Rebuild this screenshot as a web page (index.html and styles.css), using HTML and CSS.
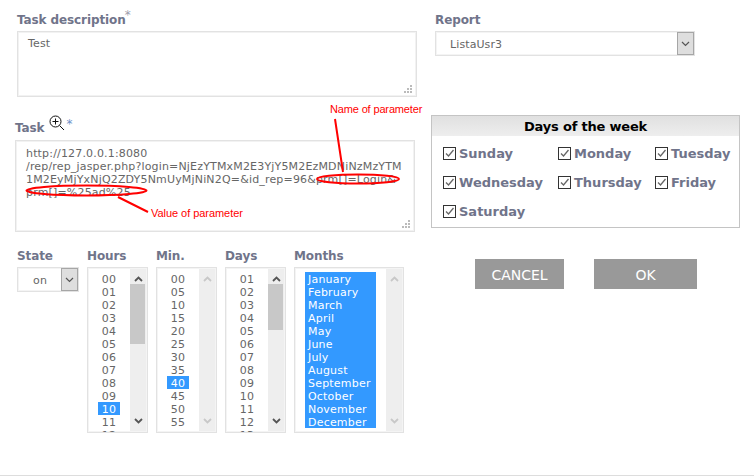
FILE: index.html
```html
<!DOCTYPE html>
<html lang="en">
<head>
<meta charset="utf-8">
<title>Task</title>
<link rel="stylesheet" href="styles.css">
</head>
<body>
<div class="page">
  <div class="left">
    <div class="label">Task description<sup class="req grey">*</sup></div>
    <div class="area area-desc">Test
      <svg class="grip" width="9" height="9" viewBox="0 0 9 9"><path d="M6 0h2v2H6zM3 3h2v2H3zM6 3h2v2H6zM0 6h2v2H0zM3 6h2v2H3zM6 6h2v2H6z"/></svg>
    </div>

    <div class="label label-task">Task
      <svg class="zoomicon" width="16" height="17" viewBox="0 0 16 17"><circle cx="6.5" cy="6.5" r="5.5"/><path d="M6.5 3.5v6M3.5 6.5h6M10.5 10.5l4.5 4.5"/></svg>
      <sup class="req blue">*</sup>
    </div>
    <div class="area area-task">http://127.0.0.1:8080<br>/rep/rep_jasper.php?login=NjEzYTMxM2E3YjY5M2EzMDNiNzMzYTM<br>1M2EyMjYxNjQ2ZDY5NmUyMjNiN2Q=&amp;id_rep=96&amp;prm[]=Login&amp;<br>prm[]=%25ad%25
      <svg class="grip" width="9" height="9" viewBox="0 0 9 9"><path d="M6 0h2v2H6zM3 3h2v2H3zM6 3h2v2H6zM0 6h2v2H0zM3 6h2v2H3zM6 6h2v2H6z"/></svg>
    </div>

    <div class="lists">
      <div class="col col-state">
        <div class="label">State</div>
        <div class="select">
          <span class="select-text select-on">on</span>
          <span class="select-btn"><svg width="9" height="6" viewBox="0 0 9 6"><path d="M1 1l3.5 3.5L8 1"/></svg></span>
        </div>
      </div>
      <div class="col col-hours">
        <div class="label">Hours</div>
        <div class="list list-short">
          <div class="opts">
            <div class="opt">00</div><div class="opt">01</div><div class="opt">02</div><div class="opt">03</div><div class="opt">04</div><div class="opt">05</div><div class="opt">06</div><div class="opt">07</div><div class="opt">08</div><div class="opt">09</div><div class="opt sel">10</div><div class="opt">11</div><div class="opt">12</div>
          </div>
          <div class="bar">
            <svg class="arrow" width="9" height="6" viewBox="0 0 9 6"><path d="M1 5l3.5-3.5L8 5"/></svg>
            <div class="thumb thumb-hours"></div>
            <svg class="arrow arrow-down" width="9" height="6" viewBox="0 0 9 6"><path d="M1 1l3.5 3.5L8 1"/></svg>
          </div>
        </div>
      </div>
      <div class="col col-min">
        <div class="label">Min.</div>
        <div class="list list-short">
          <div class="opts">
            <div class="opt">00</div><div class="opt">05</div><div class="opt">10</div><div class="opt">15</div><div class="opt">20</div><div class="opt">25</div><div class="opt">30</div><div class="opt">35</div><div class="opt sel">40</div><div class="opt">45</div><div class="opt">50</div><div class="opt">55</div>
          </div>
          <div class="bar bar-off">
            <svg class="arrow" width="9" height="6" viewBox="0 0 9 6"><path d="M1 5l3.5-3.5L8 5"/></svg>
            <svg class="arrow arrow-down" width="9" height="6" viewBox="0 0 9 6"><path d="M1 1l3.5 3.5L8 1"/></svg>
          </div>
        </div>
      </div>
      <div class="col col-days">
        <div class="label">Days</div>
        <div class="list list-short">
          <div class="opts">
            <div class="opt">01</div><div class="opt">02</div><div class="opt">03</div><div class="opt">04</div><div class="opt">05</div><div class="opt">06</div><div class="opt">07</div><div class="opt">08</div><div class="opt">09</div><div class="opt">10</div><div class="opt">11</div><div class="opt">12</div><div class="opt">13</div>
          </div>
          <div class="bar">
            <svg class="arrow" width="9" height="6" viewBox="0 0 9 6"><path d="M1 5l3.5-3.5L8 5"/></svg>
            <div class="thumb thumb-days"></div>
            <svg class="arrow arrow-down" width="9" height="6" viewBox="0 0 9 6"><path d="M1 1l3.5 3.5L8 1"/></svg>
          </div>
        </div>
      </div>
      <div class="col col-months">
        <div class="label">Months</div>
        <div class="list list-months">
          <div class="opts opts-months">
            <div class="opt sel">January</div><div class="opt sel">February</div><div class="opt sel">March</div><div class="opt sel">April</div><div class="opt sel">May</div><div class="opt sel">June</div><div class="opt sel">July</div><div class="opt sel">August</div><div class="opt sel">September</div><div class="opt sel">October</div><div class="opt sel">November</div><div class="opt sel">December</div>
          </div>
          <div class="bar bar-off">
            <svg class="arrow" width="9" height="6" viewBox="0 0 9 6"><path d="M1 5l3.5-3.5L8 5"/></svg>
            <svg class="arrow arrow-down" width="9" height="6" viewBox="0 0 9 6"><path d="M1 1l3.5 3.5L8 1"/></svg>
          </div>
        </div>
      </div>
    </div>
  </div>

  <div class="right">
    <div class="report">
      <div class="label">Report</div>
      <div class="select select-report">
        <span class="select-text">ListaUsr3</span>
        <span class="select-btn"><svg width="9" height="6" viewBox="0 0 9 6"><path d="M1 1l3.5 3.5L8 1"/></svg></span>
      </div>
    </div>

    <div class="days">
      <div class="days-title">Days of the week</div>
      <div class="days-grid">
        <div class="day"><span class="check"><svg width="11" height="11" viewBox="0 0 11 11"><path d="M2 5.5l2.5 2.5L9.5 2"/></svg></span>Sunday</div>
        <div class="day"><span class="check"><svg width="11" height="11" viewBox="0 0 11 11"><path d="M2 5.5l2.5 2.5L9.5 2"/></svg></span>Monday</div>
        <div class="day"><span class="check"><svg width="11" height="11" viewBox="0 0 11 11"><path d="M2 5.5l2.5 2.5L9.5 2"/></svg></span>Tuesday</div>
        <div class="day"><span class="check"><svg width="11" height="11" viewBox="0 0 11 11"><path d="M2 5.5l2.5 2.5L9.5 2"/></svg></span>Wednesday</div>
        <div class="day"><span class="check"><svg width="11" height="11" viewBox="0 0 11 11"><path d="M2 5.5l2.5 2.5L9.5 2"/></svg></span>Thursday</div>
        <div class="day"><span class="check"><svg width="11" height="11" viewBox="0 0 11 11"><path d="M2 5.5l2.5 2.5L9.5 2"/></svg></span>Friday</div>
        <div class="day"><span class="check"><svg width="11" height="11" viewBox="0 0 11 11"><path d="M2 5.5l2.5 2.5L9.5 2"/></svg></span>Saturday</div>
      </div>
    </div>

    <div class="actions">
      <button class="btn btn-cancel" type="button">CANCEL</button>
      <button class="btn btn-ok" type="button">OK</button>
    </div>
  </div>

  <svg class="notes" width="754" height="476" viewBox="0 0 754 476">
    <ellipse cx="358" cy="179" rx="41" ry="4.5"/>
    <ellipse cx="86.5" cy="190.5" rx="60" ry="5"/>
    <path d="M335 119l8 53M118 197l30 15"/>
    <text class="note-name" x="330" y="113">Name of parameter</text>
    <text class="note-value" x="151" y="217">Value of parameter</text>
  </svg>
</div>
</body>
</html>
```

FILE: styles.css
```css
* { box-sizing: border-box; }

html, body { margin: 0; padding: 0; background: #fff; }

body {
  font-family: "DejaVu Sans", Verdana, sans-serif;
  font-size: 11px;
  line-height: 13px;
  color: #666;
}

.page {
  position: relative;
  display: flex;
  width: 754px;
  height: 476px;
  overflow: hidden;
  border-bottom: 1px solid #ddd;
}

.left {
  width: 431px;
  padding: 12px 0 0 17px;
}

.right {
  width: 323px;
  padding-top: 12px;
}

.label {
  height: 19px;
  font-size: 12px;
  line-height: 17px;
  font-weight: bold;
  letter-spacing: -0.1px;
  color: #70748a;
  white-space: nowrap;
}

.req {
  font-size: 12px;
  font-weight: normal;
  line-height: 0;
  vertical-align: 5px;
}

.req.grey { color: #9a9cab; margin-left: -1px; }
.req.blue { color: #6d90c8; }

.label-task {
  display: flex;
  align-items: flex-start;
  height: 25px;
  margin: 18px 0 0 -2px;
  padding-top: 5px;
}

.zoomicon {
  margin: -5px 0 0 5px;
  fill: none;
  stroke: #111;
  stroke-width: 1;
}

.label-task .req { line-height: 13px; margin: -2px 0 0 1px; vertical-align: baseline; }

.area {
  position: relative;
  width: 400px;
  border: 1px solid #e2e2e2;
  box-shadow: inset 0 0 0 1px #f2f2f2;
  letter-spacing: 0.17px;
  white-space: nowrap;
}

.area-desc { height: 66px; padding: 5px 10px; }

.area-task {
  height: 92px;
  margin-left: -2px;
  padding: 6px 10px;
}

.grip {
  position: absolute;
  right: 3px;
  bottom: 2px;
  fill: #bbb;
}

.lists {
  display: flex;
  gap: 8px;
  margin-top: 16px;
}

.col-state { width: 62px; }
.col-hours, .col-min, .col-days { width: 61px; }
.col-months { width: 110px; }

.select {
  display: flex;
  align-items: stretch;
  height: 25px;
  border: 1px solid #e2e2e2;
  box-shadow: inset 0 0 0 1px #f4f4f4;
}

.select-text {
  flex: 1;
  padding-left: 14px;
  line-height: 26px;
  letter-spacing: 0.1px;
}

.select-on { text-align: center; padding: 0 0 0 1px; }

.select-btn {
  display: flex;
  align-items: center;
  justify-content: center;
  width: 17px;
  border: 1px solid #a6a6a6;
  background: #dedede;
}

.select-btn svg, .arrow { fill: none; stroke: #555; stroke-width: 1.2; }

.select-report { width: 260px; }

.report { padding-left: 4px; }

.list {
  display: flex;
  height: 166px;
  border: 1px solid #e2e2e2;
  box-shadow: inset 0 0 0 1px #f4f4f4;
  overflow: hidden;
}

.opts {
  flex: 1;
  min-width: 0;
  padding: 4px 0 0 10px;
  overflow: hidden;
}

.opts-months { padding-right: 11px; }

.opt {
  width: 22px;
  height: 13px;
  line-height: 15px;
  letter-spacing: 0.2px;
  text-align: center;
  white-space: nowrap;
}

.opts-months .opt {
  width: 71px;
  padding-left: 3px;
  text-align: left;
}

.sel { background: #3399ff; color: #fff; }

.bar {
  display: flex;
  flex-direction: column;
  align-items: center;
  width: 16px;
  margin: 1px 1px 1px 0;
  padding-top: 7px;
  background: #eeeeee;
}

.arrow { stroke-width: 1.8; flex: none; }

.arrow-down { margin-top: auto; margin-bottom: 7px; }

.bar-off .arrow { stroke: #c8c8c8; }

.thumb {
  flex: none;
  width: 15px;
  margin: 2px 1px 0 0;
  background: #c8c8c8;
}

.thumb-hours { height: 60px; }
.thumb-days { height: 46px; }

.days {
  width: 309px;
  height: 113px;
  margin-top: 59px;
  border: 1px solid #c4c4c4;
}

.days-title {
  height: 20px;
  font-size: 13px;
  line-height: 22px;
  font-weight: bold;
  letter-spacing: -0.2px;
  color: #000;
  text-align: center;
  background: linear-gradient(#e0e0e0, #eeeeee);
}

.days-grid {
  display: grid;
  grid-template-columns: 115px 97px 1fr;
  grid-auto-rows: 29px;
  padding: 3px 0 0 11px;
}

.day {
  display: flex;
  align-items: center;
  gap: 3px;
  font-size: 13px;
  font-weight: bold;
  color: #70748a;
  white-space: nowrap;
}

.check {
  display: flex;
  align-items: center;
  justify-content: center;
  width: 13px;
  height: 13px;
  border: 1px solid #333;
}

.check svg { fill: none; stroke: #666; stroke-width: 1.3; }

.actions {
  display: flex;
  gap: 30px;
  margin: 31px 0 0 44px;
}

.btn {
  height: 30px;
  padding: 2px 0 0;
  border: 0;
  background: #999;
  color: #fff;
  font: 14px "DejaVu Sans", Verdana, sans-serif;
}

.btn-cancel { width: 89px; }
.btn-ok { width: 103px; }

.notes {
  position: absolute;
  left: 0;
  top: 0;
  fill: none;
  stroke: #f00;
  stroke-width: 2;
  pointer-events: none;
}

.notes text {
  fill: #f00;
  stroke: none;
  font: 11px "Liberation Sans", Arial, sans-serif;
}

.note-name { letter-spacing: -0.15px; }
.note-value { letter-spacing: -0.05px; }
```
